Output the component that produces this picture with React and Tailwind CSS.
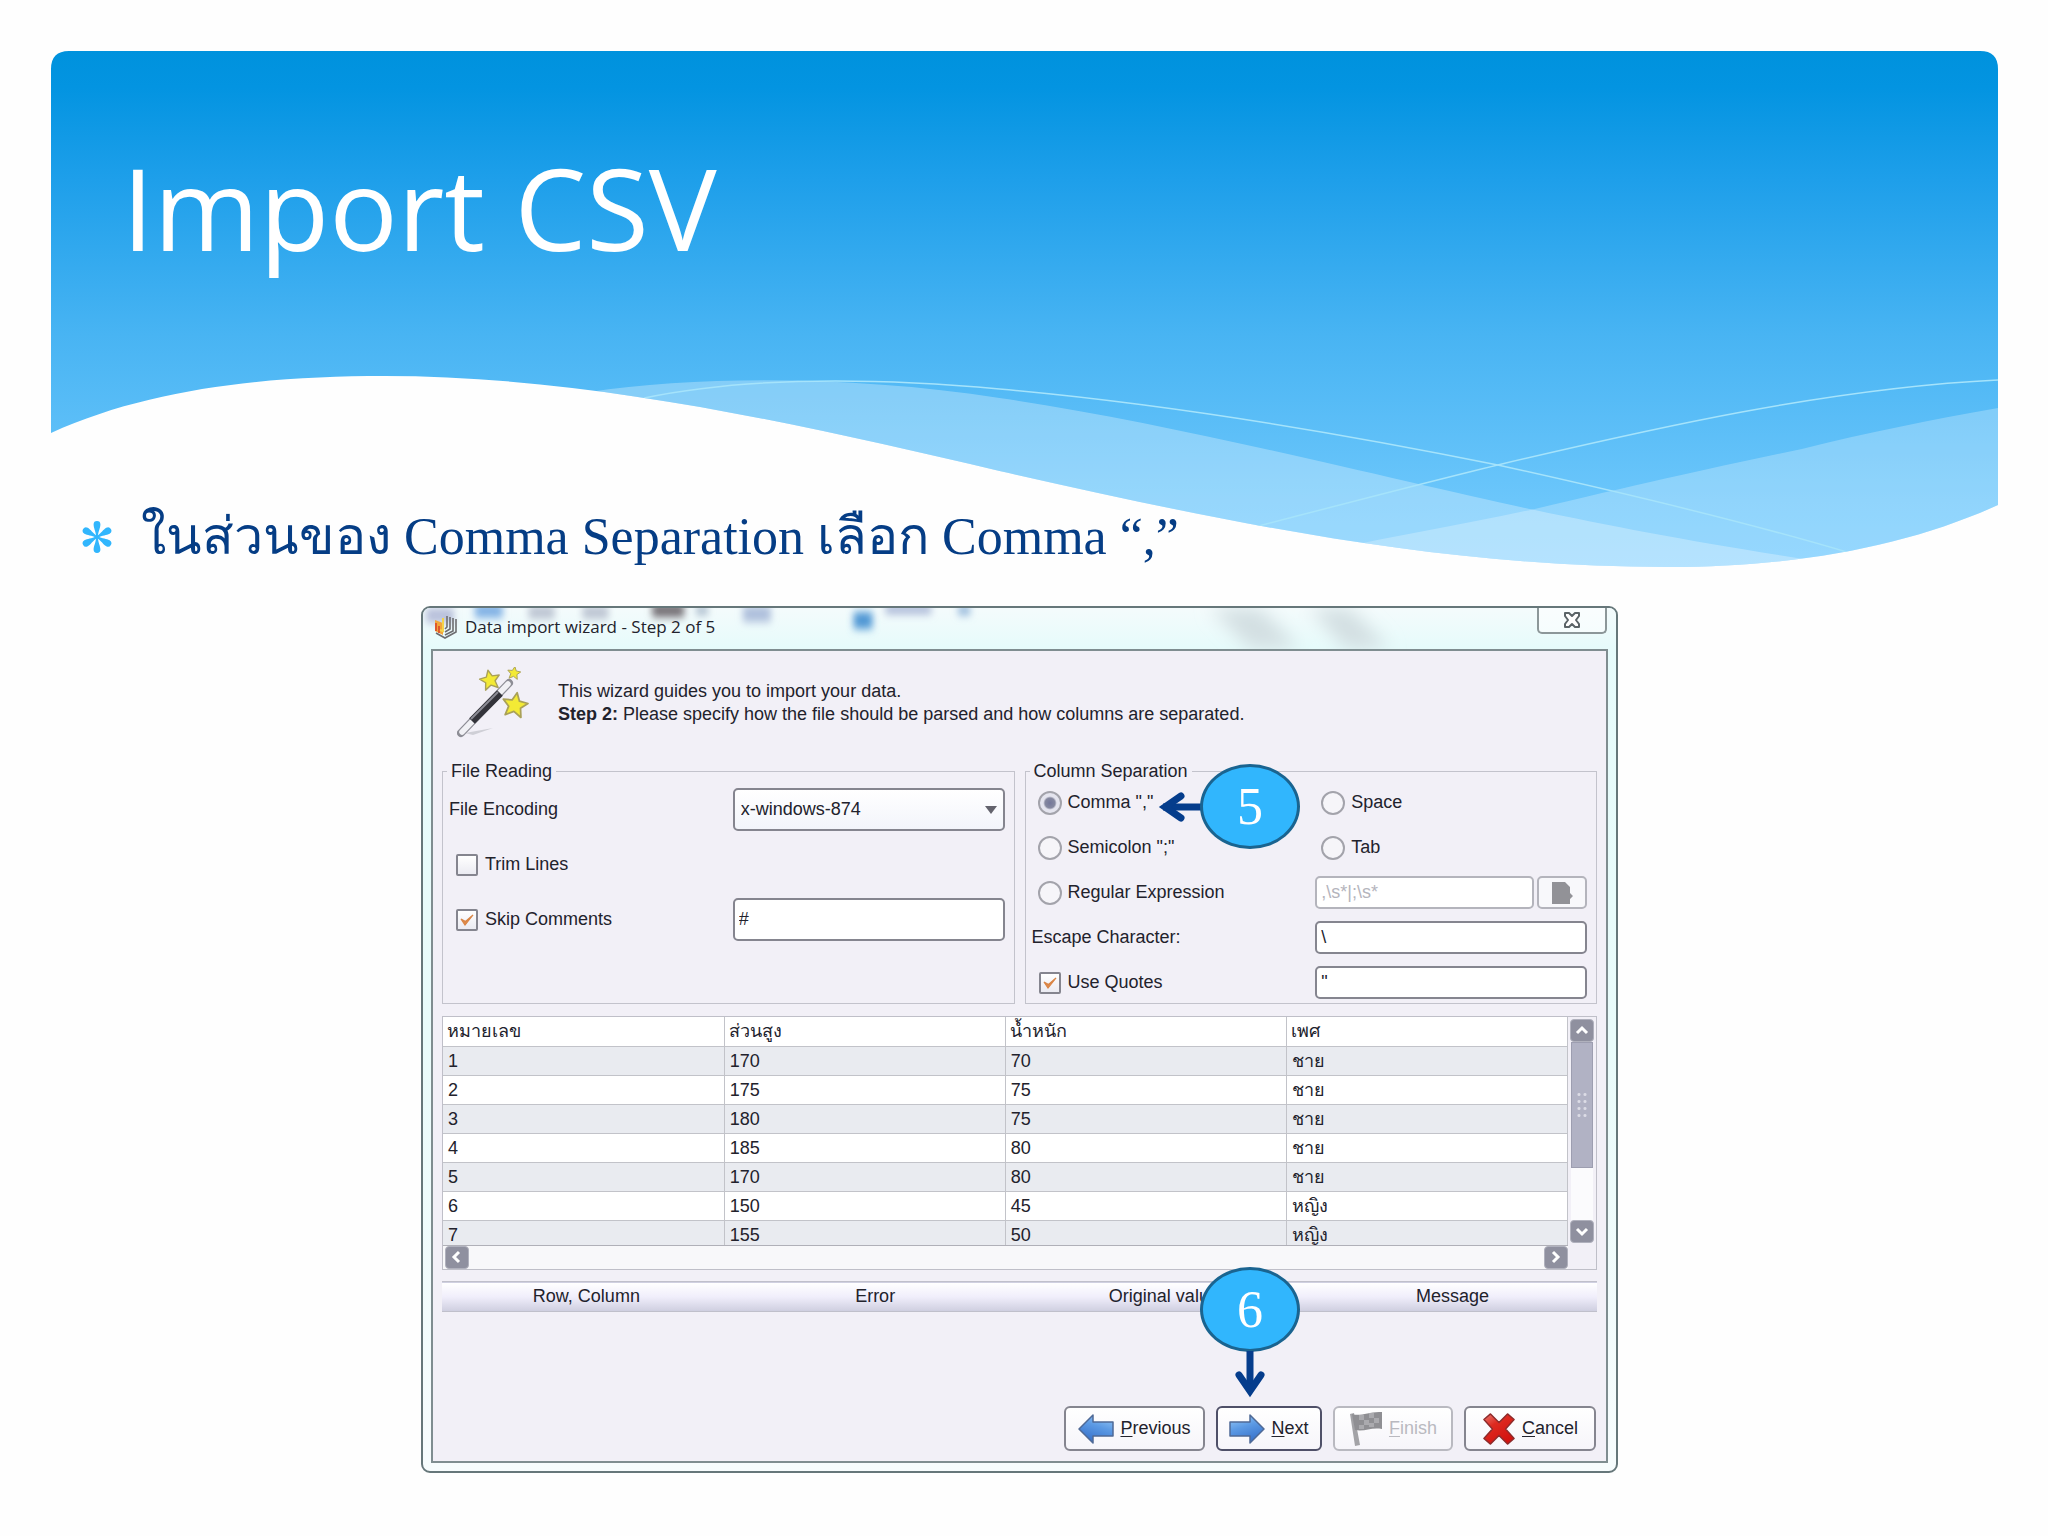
import React, { useState } from "react";

const rows = [
  ["1", "170", "70", "ชาย"],
  ["2", "175", "75", "ชาย"],
  ["3", "180", "75", "ชาย"],
  ["4", "185", "80", "ชาย"],
  ["5", "170", "80", "ชาย"],
  ["6", "150", "45", "หญิง"],
  ["7", "155", "50", "หญิง"],
];

const inputClass =
  "h-[33px] w-full min-w-0 rounded-[5px] border-2 border-[#85858f] bg-white px-1 text-[18px] text-[#22222c] disabled:border-[#b4b4bc] disabled:text-[#b4b4bc]";

const Banner = () => (
  <svg
    className="col-start-1 row-start-1 h-[516px] w-full"
    viewBox="52 51 1946 516"
    preserveAspectRatio="none"
    aria-hidden="true"
  >
    <defs>
      <linearGradient id="sky" x1="0" y1="0" x2="0" y2="1">
        <stop offset="0" stopColor="#0092dd" />
        <stop offset="0.07" stopColor="#0394e1" />
        <stop offset="0.25" stopColor="#1e9fea" />
        <stop offset="0.55" stopColor="#48b4f3" />
        <stop offset="0.87" stopColor="#6bc6fb" />
        <stop offset="1" stopColor="#74cbff" />
      </linearGradient>
      <clipPath id="bannerShape">
        <path d="M52 433 V69 Q52 51 70 51 H1980 Q1998 51 1998 69 V505 C1910 545 1800 567 1668 567 C1440 567 1230 523 1000 471 C800 424 590 376 385 376 C270 376 150 388 52 433 Z" />
      </clipPath>
    </defs>
    <g clipPath="url(#bannerShape)">
      <rect x="52" y="51" width="1946" height="516" fill="url(#sky)" />
      <path
        d="M590 392 C700 375 860 376 1000 398 C1180 424 1400 482 1535 510 C1620 528 1710 545 1830 563 V600 H590 Z"
        fill="#fff"
        fillOpacity="0.29"
      />
      <path
        d="M1330 550 C1400 535 1470 523 1535 509 C1640 484 1720 466 1802 449 C1870 432 1930 420 1998 408 V600 H1330 Z"
        fill="#fff"
        fillOpacity="0.25"
      />
      <path
        d="M645 398 C760 374 900 380 1000 389 C1180 405 1350 435 1498 465 C1620 492 1740 520 1850 553"
        fill="none"
        stroke="#a5e3fb"
        strokeWidth="1.5"
      />
      <path
        d="M1255 527 C1340 505 1420 484 1498 465 C1650 429 1830 388 1998 380"
        fill="none"
        stroke="#a5e3fb"
        strokeWidth="1.5"
      />
    </g>
  </svg>
);

const Bullet = () => (
  <svg className="h-8 w-[30px] shrink-0" viewBox="-15 -16 30 32" fill="#31b6fd" aria-hidden="true">
    {[0, 60, 120, 180, 240, 300].map((angle) => (
      <path
        key={angle}
        d="M-0.8 0 C-1.200 -6 -3.400 -9 -3.400 -12.600 A3.4 3.4 0 0 1 3.400 -12.600 C3.400 -9 1.200 -6 0.800 0 Z"
        transform={`rotate(${angle})`}
      />
    ))}
  </svg>
);

// coloured smudges of the windows that shine through the glass title bar
const Glass = () => (
  <svg
    className="col-start-1 row-start-1 h-[41px] w-full"
    viewBox="0 0 1197 41"
    preserveAspectRatio="none"
    aria-hidden="true"
  >
    <defs>
      <linearGradient id="glass" x1="0" y1="0" x2="0" y2="1">
        <stop offset="0" stopColor="#f4fbfc" />
        <stop offset="1" stopColor="#e6fbfb" />
      </linearGradient>
      <filter id="smudge" x="-30%" y="-80%" width="160%" height="260%">
        <feGaussianBlur stdDeviation="4" />
      </filter>
      <filter id="smudgeWide" x="-30%" y="-80%" width="160%" height="260%">
        <feGaussianBlur stdDeviation="9" />
      </filter>
    </defs>
    <rect width="1197" height="41" fill="url(#glass)" />
    <g filter="url(#smudge)">
      <rect x="3" y="0" width="28" height="15" fill="#b7bfda" />
      <rect x="52" y="-4" width="28" height="14" fill="#7fb0e4" />
      <rect x="106" y="-2" width="26" height="13" fill="#bcc4d2" />
      <rect x="160" y="-2" width="26" height="13" fill="#bcc4d2" />
      <rect x="230" y="-4" width="32" height="13" fill="#6f6a70" />
      <rect x="274" y="-2" width="12" height="9" fill="#a9bacb" />
      <rect x="321" y="-2" width="28" height="16" fill="#aebfdc" />
      <rect x="432" y="4" width="19" height="17" fill="#4f97d4" />
      <rect x="464" y="-3" width="46" height="9" fill="#a8b6d6" />
      <rect x="537" y="-2" width="12" height="9" fill="#8db2d8" />
    </g>
    <path
      d="M790 0 H840 L880 41 H830 Z M890 0 H930 L970 41 H925 Z"
      fill="#d3dfe2"
      filter="url(#smudgeWide)"
    />
  </svg>
);

const AppLogo = () => (
  <svg className="h-6 w-[23px]" viewBox="0 0 23 24" aria-hidden="true">
    <path d="M1 5 L9 8 V20 L1 16 Z" fill="#f2a53a" />
    <path d="M2 8 V16 M5 11 V18" stroke="#d9442c" strokeWidth="1.6" />
    <path d="M9 3 V16 L6 15" fill="none" stroke="#f4d34a" strokeWidth="2" />
    <path
      d="M2 18 L11 23 L22 17 V4 M11 20 L19 16 V3 M11 17 L16 14 V2 M11 14 L13 12 V1"
      fill="none"
      stroke="#6d6d70"
      strokeWidth="1.6"
    />
  </svg>
);

const star = "M0 -10 L3 -3.6 L10 -3 L4.8 1.8 L6.4 9 L0 5.2 L-6.4 9 L-4.8 1.8 L-10 -3 L-3 -3.6 Z";

const WandIcon = () => (
  <svg className="h-[72px] w-[72px]" viewBox="0 0 72 72" aria-hidden="true">
    <path d="M8 66 L36 61 L16 68 Z" fill="#cfcfd6" />
    <path d="M4 66 L52 16" stroke="#8e8e96" strokeWidth="8" strokeLinecap="round" />
    <path d="M5 65 L51 17" stroke="#f1f1f5" strokeWidth="5.5" strokeLinecap="round" />
    <path d="M15 54 L43 26" stroke="#33333a" strokeWidth="8" />
    <path d="M14 52 L41 25" stroke="#8b8b95" strokeWidth="2" />
    <g fill="#f3ea35" stroke="#aaa158" strokeWidth="1.4" strokeLinejoin="round">
      <path d={star} transform="translate(33 13) rotate(-12)" />
      <path d={star} transform="translate(57 6) rotate(8) scale(0.65)" />
      <path d={star} transform="translate(58 38) rotate(10) scale(1.25)" />
    </g>
  </svg>
);

const Check = ({ label, checked }) => (
  <label className="flex items-center gap-[7px] pl-[7px]">
    <span className="grid">
      <input
        type="checkbox"
        defaultChecked={checked}
        className="peer col-start-1 row-start-1 h-[22px] w-[22px] appearance-none rounded-[2px] border-2 border-[#85858f] bg-linear-to-b from-white to-[#ebebf2]"
      />
      <svg
        className="pointer-events-none invisible col-start-1 row-start-1 h-[22px] w-[22px] peer-checked:visible"
        viewBox="0 0 22 22"
        aria-hidden="true"
      >
        <path d="M5 10 L9 16 L17 6 L9.500 12.500 Z" fill="#e08a4a" stroke="#d98545" strokeWidth="1.2" />
      </svg>
    </span>
    {label}
  </label>
);

const Radio = ({ label, value, selected, onSelect }) => (
  <label className="flex h-[33px] items-center gap-[6px] pl-[6px]">
    <input
      type="radio"
      name="separator"
      value={value}
      checked={selected === value}
      onChange={() => onSelect(value)}
      className="h-6 w-6 appearance-none rounded-full border-2 border-[#a3a3ab] bg-[#f6f5f9] checked:bg-[radial-gradient(circle,#74779a_0,#85889f_35%,#e4e4ee_48%)]"
    />
    {label}
  </label>
);

const Group = ({ title, children }) => (
  <fieldset className="min-w-0 border border-[#c3c3cc]">
    <legend className="ml-1 px-1 leading-6">{title}</legend>
    {children}
  </fieldset>
);

const ScrollButton = ({ label, d }) => (
  <button
    type="button"
    aria-label={label}
    className="h-[23px] w-[24px] shrink-0 rounded-[4px] border border-[#b0b1bd] bg-[#8f909f]"
  >
    <svg viewBox="0 0 22 21" className="h-full w-full" aria-hidden="true">
      <path d={d} fill="none" stroke="#fff" strokeWidth="3" />
    </svg>
  </button>
);

const FooterButton = ({ label, icon, className, disabled }) => (
  <button
    type="button"
    disabled={disabled}
    className={`flex h-[45px] items-center justify-center gap-[6px] rounded-[6px] border-2 bg-linear-to-b from-white to-[#f6f5fa] disabled:text-[#b9b9c0] ${className}`}
  >
    {icon}
    <span>
      <u className="underline-offset-2">{label[0]}</u>
      {label.slice(1)}
    </span>
  </button>
);

const ArrowIcon = ({ flip }) => (
  <svg className={flip ? "h-[30px] w-9 -scale-x-100" : "h-[30px] w-9"} viewBox="0 0 36 30" aria-hidden="true">
    <defs>
      <linearGradient id="arrowBlue" x1="0" y1="0" x2="0.4" y2="1">
        <stop offset="0" stopColor="#9ccdf8" />
        <stop offset="0.5" stopColor="#5c9ae4" />
        <stop offset="1" stopColor="#3a74cc" />
      </linearGradient>
    </defs>
    <path
      d="M1 8 H21 V1 L35 15 L21 29 V22 H1 Z"
      fill="url(#arrowBlue)"
      stroke="#4f6a96"
      strokeWidth="1.5"
      strokeLinejoin="round"
    />
  </svg>
);

const FlagIcon = () => (
  <svg className="h-9 w-[34px]" viewBox="0 0 34 36" aria-hidden="true">
    <path d="M1 3 L5 2 L11 34 L6 35 Z" fill="#a3a3a7" />
    <path d="M3 3 C12 6 20 0 33 1 V18 C22 16 16 21 6 19 Z" fill="#8f8f93" />
    <path
      d="M10 4 h5 v5 h-5 z M20 2 h5 v5 h-5 z M15 9 h5 v5 h-5 z M25 7 h5 v5 h-5 z M10 14 h5 v4 h-5 z M20 12 h5 v4 h-5 z"
      fill="#aaaaae"
    />
  </svg>
);

const CrossIcon = () => (
  <svg className="h-[34px] w-[34px]" viewBox="0 0 36 36" aria-hidden="true">
    <defs>
      <linearGradient id="crossRed" x1="0" y1="0" x2="0.6" y2="1">
        <stop offset="0" stopColor="#ea7a72" />
        <stop offset="0.4" stopColor="#dd2a20" />
        <stop offset="1" stopColor="#d3120f" />
      </linearGradient>
    </defs>
    <path
      d="M9 2 L18 11 L27 2 L34 8 L25 18 L34 28 L27 34 L18 25 L9 34 L2 28 L11 18 L2 8 Z"
      fill="url(#crossRed)"
      stroke="#8d2b2b"
      strokeWidth="1.5"
      strokeLinejoin="round"
    />
  </svg>
);

const Circle = ({ children }) => (
  <span className="flex h-[85px] w-[100px] items-center justify-center rounded-[50%] border-[3px] border-[#1a6490] bg-[#31b6fd] font-['Liberation_Serif',serif] text-[52px] leading-none text-white">
    {children}
  </span>
);

const App = () => {
  const [separator, setSeparator] = useState("comma");

  return (
    <main className="min-h-screen bg-[#fefefe] pt-[51px] pb-16">
      <div className="grid">
        <div className="col-start-1 row-start-1 mr-[50px] ml-[51px] grid">
          <Banner />
        </div>
        <div className="z-10 col-start-1 row-start-1 pt-[100px] pl-[82px]">
          <h1 className="pl-10 font-['Open_Sans',sans-serif] text-[114px] leading-[112px] text-white">
            Import CSV
          </h1>
          <ul className="mt-[234px]">
            <li className="flex items-center gap-[29px] font-['Liberation_Serif',serif] text-[52px] leading-[80px] text-[#053d85]">
              <Bullet />
              <span>ในส่วนของ Comma Separation เลือก Comma “,”</span>
            </li>
          </ul>
        </div>
      </div>

      <div className="mt-[29px] grid grid-cols-[421fr_1197fr_430fr]">
        <section className="relative col-start-2 overflow-hidden rounded-[9px] border-2 border-[#66777a] bg-linear-to-b from-[#e6fbfb] via-[#e9fbfa] to-[#f7fcfd] pb-2 font-['Liberation_Sans',sans-serif] text-[18px] text-[#22222c]">
          <header className="grid">
            <Glass />
            <div className="z-10 col-start-1 row-start-1 flex items-start justify-between pr-[9px] pl-[11px]">
              <h2 className="flex items-center gap-2 pt-[7px] font-['Open_Sans',sans-serif] text-[17px] leading-6">
                <AppLogo />
                Data import wizard - Step 2 of 5
              </h2>
              <button
                type="button"
                aria-label="Close"
                className="flex h-[26px] w-[70px] items-center justify-center rounded-b-[5px] border-2 border-t-0 border-[#8c9799] bg-white/50"
              >
                <svg className="h-4 w-[18px]" viewBox="0 0 18 16" aria-hidden="true">
                  <path
                    d="M2 1 H6 L9 4 L12 1 H16 V4 L13 8 L16 12 V15 H12 L9 12 L6 15 H2 V12 L5 8 L2 4 Z"
                    fill="#fff"
                    stroke="#5b6468"
                    strokeWidth="2"
                    strokeLinejoin="round"
                  />
                </svg>
              </button>
            </div>
          </header>

          <div className="mx-[8px] border-2 border-[#7f8d90] bg-[#f2f0f7] pr-[9px] pb-[10px] pl-[9px]">
            <div className="flex items-center gap-[29px] pt-4 pb-5 pl-[15px]">
              <WandIcon />
              <p className="leading-[23px]">
                This wizard guides you to import your data.
                <br />
                <b>Step 2:</b> Please specify how the file should be parsed and how columns are separated.
              </p>
            </div>

            <div className="grid grid-cols-2 gap-[10px]">
              <Group title="File Reading">
                <div className="grid auto-rows-[43px] grid-cols-[284fr_272fr] items-center gap-y-3 pt-[5px] pr-[9px] pl-[6px]">
                  <label htmlFor="encoding">File Encoding</label>
                  <div className="grid items-center">
                    <select
                      id="encoding"
                      className="col-start-1 row-start-1 h-[43px] w-full appearance-none rounded-[5px] border-2 border-[#85858f] bg-linear-to-b from-white to-[#f3f5fb] px-[6px]"
                    >
                      <option>x-windows-874</option>
                    </select>
                    <svg
                      className="pointer-events-none col-start-1 row-start-1 mr-2 h-[8px] w-3 justify-self-end"
                      viewBox="0 0 12 8"
                      aria-hidden="true"
                    >
                      <path d="M0 0 H12 L6 8 Z" fill="#63636d" />
                    </svg>
                  </div>
                  <div className="col-span-2">
                    <Check label="Trim Lines" />
                  </div>
                  <Check label="Skip Comments" checked />
                  <input aria-label="Comment character" defaultValue="#" className={`${inputClass} h-[43px]`} />
                </div>
              </Group>

              <Group title="Column Separation">
                <div className="grid auto-rows-[33px] grid-cols-[284fr_272fr] items-center gap-y-3 pt-[3px] pr-[9px] pb-1 pl-[6px]">
                  <Radio label={'Comma ","'} value="comma" selected={separator} onSelect={setSeparator} />
                  <Radio label="Space" value="space" selected={separator} onSelect={setSeparator} />
                  <Radio label={'Semicolon ";"'} value="semicolon" selected={separator} onSelect={setSeparator} />
                  <Radio label="Tab" value="tab" selected={separator} onSelect={setSeparator} />
                  <Radio label="Regular Expression" value="regex" selected={separator} onSelect={setSeparator} />
                  <div className="flex gap-[3px]">
                    <input aria-label="Expression" defaultValue=",\s*|;\s*" disabled className={inputClass} />
                    <button
                      type="button"
                      aria-label="Edit expression"
                      disabled
                      className="flex w-[50px] shrink-0 items-center justify-center rounded-[5px] border-2 border-[#b4b4bc] bg-[#f8f8fb]"
                    >
                      <svg className="h-6 w-[22px]" viewBox="0 0 22 24" aria-hidden="true">
                        <path d="M1 1 H14 L19 6 V12 L22 15 L19 18 V23 H1 Z" fill="#929297" />
                      </svg>
                    </button>
                  </div>
                  <label htmlFor="escape">Escape Character:</label>
                  <input id="escape" defaultValue="\" className={inputClass} />
                  <Check label="Use Quotes" checked />
                  <input aria-label="Quote character" defaultValue={'"'} className={inputClass} />
                </div>
              </Group>
            </div>

            <div className="mt-3 border border-[#bfbfc8] bg-[#f2f0f7]">
              <div className="flex">
                <div className="h-[228px] flex-1 overflow-hidden">
                  <table className="w-full table-fixed text-left">
                    <thead>
                      <tr className="h-[29px] border-b border-[#c2c3c9] bg-white">
                        {["หมายเลข", "ส่วนสูง", "น้ำหนัก", "เพศ"].map((name) => (
                          <th key={name} className="border-r border-[#c2c3c9] px-1 py-0 leading-7 font-normal">
                            {name}
                          </th>
                        ))}
                      </tr>
                    </thead>
                    <tbody>
                      {rows.map((row) => (
                        <tr key={row[0]} className="h-[29px] border-b border-[#c2c3c9] odd:bg-[#e9ebf0] even:bg-white">
                          {row.map((cell, i) => (
                            <td key={i} className="border-r border-[#c2c3c9] px-[5px] py-0 leading-7">
                              {cell}
                            </td>
                          ))}
                        </tr>
                      ))}
                    </tbody>
                  </table>
                </div>
                <div className="flex w-7 flex-col items-center py-[2px]">
                  <ScrollButton label="Scroll up" d="M6 13 L11 8 L16 13" />
                  <div className="w-[22px] flex-1 bg-[#fbfbfd]">
                    <div className="flex h-[126px] items-center justify-center border border-[#9d9eb0] bg-[#b1b2c4]">
                      <div className="h-7 w-3 bg-[radial-gradient(circle,#dcdce6_1px,transparent_2px)] bg-size-[6px_7px]" />
                    </div>
                  </div>
                  <ScrollButton label="Scroll down" d="M6 8 L11 13 L16 8" />
                </div>
              </div>
              <div className="mr-7 flex h-6 border-t border-[#b0b0b8] bg-[#f8f8fa] pl-[2px]">
                <ScrollButton label="Scroll left" d="M13 5 L8 10 L13 15" />
                <div className="flex-1" />
                <ScrollButton label="Scroll right" d="M8 5 L13 10 L8 15" />
              </div>
            </div>

            <table className="mt-[11px] w-full table-fixed">
              <thead>
                <tr className="h-[30px] border-t border-b border-[#c0c0cb] bg-linear-to-b from-white via-[#f0eefb] to-[#cfcfe0]">
                  <th className="p-0 font-normal">Row, Column</th>
                  <th className="p-0 font-normal">Error</th>
                  <th className="p-0 font-normal">Original value</th>
                  <th className="p-0 font-normal">Message</th>
                </tr>
              </thead>
            </table>

            <div className="mt-[94px] flex justify-end gap-[11px] pr-[1px]">
              <FooterButton label="Previous" icon={<ArrowIcon flip />} className="w-[141px] border-[#85858f]" />
              <FooterButton label="Next" icon={<ArrowIcon />} className="w-[106px] border-[#4f5068]" />
              <FooterButton label="Finish" icon={<FlagIcon />} disabled className="w-[120px] border-[#b9b9c0]" />
              <FooterButton label="Cancel" icon={<CrossIcon />} className="w-[132px] border-[#85858f]" />
            </div>
          </div>

          <div className="absolute top-[156px] right-[316px] flex items-center">
            <svg className="-mr-px h-[32px] w-[48px]" viewBox="0 0 48 32" aria-hidden="true">
              <path d="M10 16 H48" stroke="#053d8c" strokeWidth="7" />
              <path d="M28 5 L12 16 L28 27" fill="none" stroke="#053d8c" strokeWidth="7" strokeLinecap="round" />
            </svg>
            <Circle>5</Circle>
          </div>
          <div className="absolute top-[659px] right-[316px] flex flex-col items-center">
            <Circle>6</Circle>
            <svg className="-mt-px h-[48px] w-[32px]" viewBox="0 0 32 48" aria-hidden="true">
              <path d="M16 0 V38" stroke="#053d8c" strokeWidth="7" />
              <path d="M5 24 L16 40 L27 24" fill="none" stroke="#053d8c" strokeWidth="7" strokeLinecap="round" />
            </svg>
          </div>
        </section>
      </div>
    </main>
  );
};

export default App;
